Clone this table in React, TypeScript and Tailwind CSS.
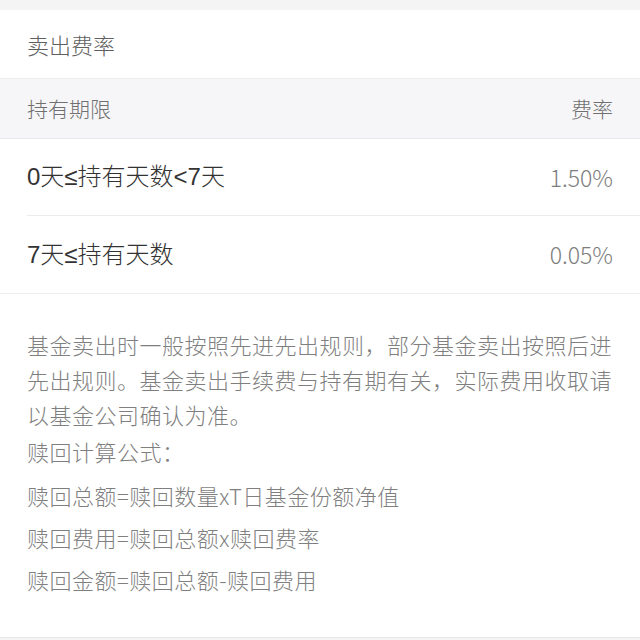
const LATIN_FIRST = "font-['Liberation_Sans','Noto_Sans_CJK_SC',sans-serif]";
const CJK_FIRST = "font-['Noto_Sans_CJK_SC','Noto_Sans',sans-serif]";

const ROWS = [
  { period: '0天≤持有天数<7天', rate: '1.50%' },
  { period: '7天≤持有天数', rate: '0.05%' },
];

const FORMULAS = [
  '赎回总额=赎回数量xT日基金份额净值',
  '赎回费用=赎回总额x赎回费率',
  '赎回金额=赎回总额-赎回费用',
];

export default function App() {
  return (
    <div className={`${CJK_FIRST} h-[640px] w-[640px] overflow-hidden bg-[#f4f4f5] font-light`}>
      <div className="mt-[10px] bg-white">
        <div className="flex h-[69px] items-center border-b border-[#ececee] px-[27px] text-[22px] text-[#606060]">
          卖出费率
        </div>

        <div className="flex h-[60px] items-center justify-between border-b border-[#e8e8ea] bg-[#f6f6f9] px-[27px] text-[21px] text-[#707070]">
          <span>持有期限</span>
          <span>费率</span>
        </div>

        {ROWS.map((row, i) => (
          <div
            key={row.period}
            className={i === ROWS.length - 1 ? 'border-b border-[#ececee]' : 'pl-[27px]'}
          >
            <div
              className={
                i === ROWS.length - 1
                  ? 'flex h-[77px] items-center justify-between px-[27px]'
                  : 'flex h-[77px] items-center justify-between border-b border-[#ececee] pr-[27px]'
              }
            >
              <span className={`${LATIN_FIRST} text-[24px] text-[#333]`}>{row.period}</span>
              <span className="text-[23px] text-[#7d7d7d]">{row.rate}</span>
            </div>
          </div>
        ))}

        <div className="h-[344px] border-b border-[#e6e6e8] px-[27px] pt-[33px] text-[22px] tracking-[0.5px] text-[#7f7f7f]">
          <p className="leading-[35px]">
            基金卖出时一般按照先进先出规则，部分基金卖出按照后进先出规则。基金卖出手续费与持有期有关，实际费用收取请以基金公司确认为准。
          </p>
          <p className="mt-[2px] leading-[35px]">赎回计算公式：</p>
          <div className="mt-[5px]">
            {FORMULAS.map((line) => (
              <p key={line} className="leading-[42px]">
                {line}
              </p>
            ))}
          </div>
        </div>
      </div>
    </div>
  );
}
